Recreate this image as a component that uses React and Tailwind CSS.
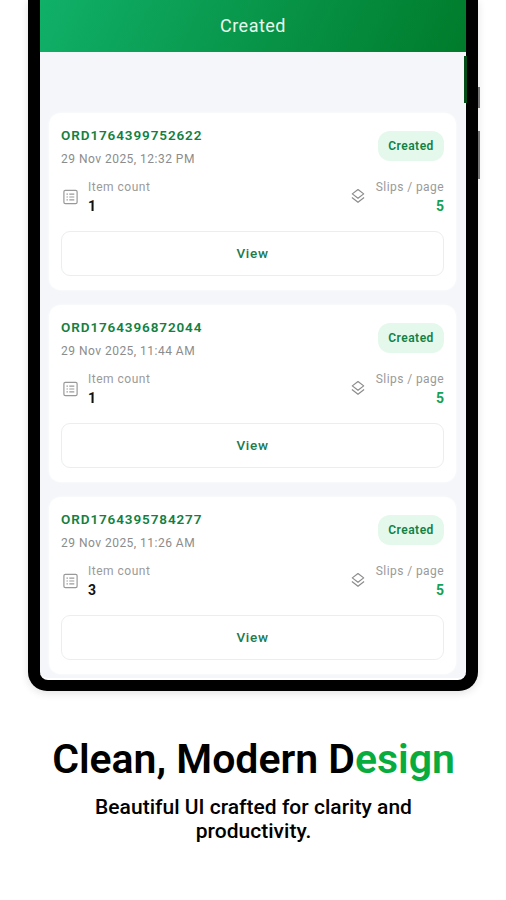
const orders = [
    { id: "ORD1764399752622", date: "29 Nov 2025, 12:32 PM", status: "Created", items: 1, slips: 5 },
    { id: "ORD1764396872044", date: "29 Nov 2025, 11:44 AM", status: "Created", items: 1, slips: 5 },
    { id: "ORD1764395784277", date: "29 Nov 2025, 11:26 AM", status: "Created", items: 3, slips: 5 },
];

const ListIcon = () => (
    <svg className="w-4 h-4" viewBox="0 0 16 16" fill="none" stroke="#999999" strokeWidth="1.2">
        <rect x="1.9" y="1.4" width="13.2" height="13.2" rx="1.4" />
        <path d="M4.5 5.2h1.4M4.5 8h1.4M4.5 10.8h1.4M7.3 5.2h5M7.3 8h5M7.3 10.8h5" />
    </svg>
);

const LayersIcon = () => (
    <svg className="w-4 h-4" viewBox="0 0 16 16" fill="none" stroke="#8c8c8c" strokeWidth="1.2" strokeLinejoin="round">
        <path d="M8 1.5l5.7 4.4L8 10.3 2.3 5.9z" />
        <path d="M1.9 9.6L8 14.3l6.1-4.7" />
    </svg>
);

const OrderCard = ({ order }) => {
    return (
        <div className="h-[177px] rounded-xl bg-white px-3 pt-[13px] shadow-[0_0_3px_rgba(255,255,255,0.9)]">
            {/* Order id and status */}
            <div className="flex h-[53px] items-start justify-between">
                <div>
                    <h3 className="h-[24px] text-[13.5px] leading-[19px] font-semibold tracking-[0.9px] text-[#12803f]">{order.id}</h3>
                    <p className="text-[12px] leading-[18px] tracking-[0.48px] text-[#8c8c8c]">{order.date}</p>
                </div>
                <span className="mt-[5px] flex h-[30px] w-[66px] items-center justify-center rounded-xl bg-[#e4f8ec] text-[12px] font-semibold tracking-[0.5px] text-[#128043]">
                    {order.status}
                </span>
            </div>

            {/* Item and slip counts */}
            <div className="flex h-[52px] justify-between pt-px">
                <div className="flex items-start gap-[10px] pl-[1px]">
                    <div className="mt-[9px]">
                        <ListIcon />
                    </div>
                    <div>
                        <p className="h-[17px] text-[12px] leading-[15px] tracking-[0.5px] text-[#9a9a9a]">Item count</p>
                        <p className="text-[14px] leading-[18px] font-bold text-[#111111]">{order.items}</p>
                    </div>
                </div>
                <div className="flex items-start gap-[10px]">
                    <div className="mt-[8px]">
                        <LayersIcon />
                    </div>
                    <div className="text-right">
                        <p className="h-[17px] text-[12px] leading-[15px] tracking-[0.42px] text-[#9a9a9a]">Slips / page</p>
                        <p className="text-[14px] leading-[18px] font-bold text-[#16a056]">{order.slips}</p>
                    </div>
                </div>
            </div>

            <button className="h-[45px] w-full rounded-[9px] border border-[#eaefed] text-[13.5px] font-medium tracking-[0.7px] text-[#237a4b]">
                View
            </button>
        </div>
    );
};

const App = () => {
    return (
        <div className="h-[900px] w-[506px] overflow-hidden bg-white font-['Roboto',sans-serif]">
            {/* Phone frame */}
            <div className="relative mx-auto h-[691px] w-[450px] rounded-b-[19px] border-x-12 border-b-11 border-black bg-black shadow-[0_2px_9px_rgba(0,0,0,0.12)]">
                <div className="h-[680px] overflow-hidden rounded-b-[8px] border-b-2 border-white bg-[#f4f6fa]">
                    <header className="flex h-[52px] items-center justify-center bg-linear-[115deg] from-[#10b069] via-[#08964a] to-[#007b2b] pb-[2px] text-[18px] tracking-[0.5px] text-[#e6f8ec]">
                        Created
                    </header>
                    <div className="flex flex-col gap-[15px] pt-[61px] pr-[10px] pl-[9px]">
                        {orders.map((order) => (
                            <OrderCard key={order.id} order={order} />
                        ))}
                    </div>
                </div>
                {/* Side buttons and edge light */}
                <div className="absolute top-[56px] -right-px h-[47px] w-[3px] bg-[#034d18]"></div>
                <div className="absolute top-[87px] -right-[14px] h-[21px] w-[2px] bg-[#777777]"></div>
                <div className="absolute top-[131px] -right-[14px] h-[48px] w-[2px] bg-[#777777]"></div>
            </div>

            <div className="pt-[44px] text-center text-black">
                <h1 className="pl-px text-[41px] leading-[48px] font-semibold tracking-[-0.02px] whitespace-nowrap">
                    Clean, Modern D<span className="text-[#08ac3e]">esign</span>
                </h1>
                <p className="mt-[12px] pl-px text-[21px] leading-[24px] font-medium tracking-[0.02px]">
                    Beautiful UI crafted for clarity and
                    <br />
                    productivity.
                </p>
            </div>
        </div>
    );
};

export default App;
